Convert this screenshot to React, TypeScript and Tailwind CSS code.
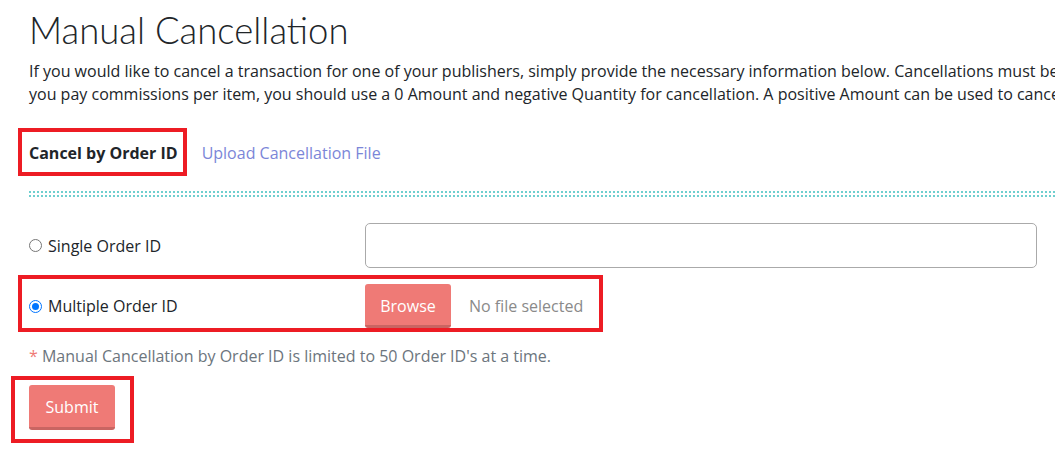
import React from "react";

const RedBox = ({ className }: { className: string }) => (
  <div className={`pointer-events-none absolute border-4 border-[#ed1c24] ${className}`} />
);

export default function App() {
  return (
    <div className="relative h-[452px] w-[1055px] overflow-hidden bg-white font-['Open_Sans',sans-serif] text-[#212529]">
      <div className="pl-[29px] pt-[6px]">
        <h1 className="font-['Lato',sans-serif] text-[36.5px] font-light leading-[48px]">Manual Cancellation</h1>
        <div className="mt-[6px] text-[16px] leading-[23px] whitespace-nowrap">
          <p>
            If you would like to cancel a transaction for one of your publishers, simply provide the necessary
            information below. Cancellations must be made within 30 days.
          </p>
          <p>
            you pay commissions per item, you should use a 0 Amount and negative Quantity for cancellation. A positive
            Amount can be used to cancel a partial amount.
          </p>
        </div>

        {/* tabs */}
        <div className="mt-[35px] flex items-center gap-[24px] text-[16px]">
          <div className="relative">
            <span className="font-bold">Cancel by Order ID</span>
            <RedBox className="-left-[11px] -top-[13px] h-[48px] w-[169px]" />
          </div>
          <span className="text-[#7b86d8]">Upload Cancellation File</span>
        </div>

        <div className="mt-[26px] h-[6px] border-y-2 border-dotted border-[#6ecfcf]" />

        {/* form */}
        <div className="mt-[26px] grid grid-cols-[336px_672px] items-center gap-y-[16px] text-[16px]">
          <label className="flex items-center gap-[6px]">
            <span className="h-[13px] w-[13px] rounded-full border border-[#767676] bg-white" />
            <span>Single Order ID</span>
          </label>
          <div className="h-[45px] rounded-[5px] border border-[#aaaaaa]" />

          <label className="relative flex items-center gap-[6px]">
            <span className="flex h-[13px] w-[13px] items-center justify-center rounded-full border border-[#0075ff]">
              <span className="h-[7px] w-[7px] rounded-full bg-[#0075ff]" />
            </span>
            <span>Multiple Order ID</span>
            <RedBox className="-left-[11px] -top-[19px] h-[57px] w-[585px]" />
          </label>
          <div className="flex h-[44px] items-center">
            <span className="flex h-[44px] w-[86px] items-center justify-center rounded-[3px] border-b-[3px] border-[#c96562] bg-[#ef7a76] pt-[2px] text-[#fff]">
              Browse
            </span>
            <span className="ml-[18px] text-[#8a8a8a]">No file selected</span>
          </div>
        </div>

        <p className="mt-[16px] text-[16px] text-[#6c757d]">
          <span className="text-[#ef7a76]">*</span> Manual Cancellation by Order ID is limited to 50 Order ID's at a time.
        </p>

        <div className="relative mt-[17px] w-[86px]">
          <button className="flex h-[45px] w-[86px] items-center justify-center rounded-[3px] border-b-[3px] border-[#c96562] bg-[#ef7a76] pt-[2px] text-[16px] text-white">
            Submit
          </button>
          <RedBox className="-left-[18px] -top-[9px] h-[67px] w-[123px]" />
        </div>
      </div>
    </div>
  );
}
